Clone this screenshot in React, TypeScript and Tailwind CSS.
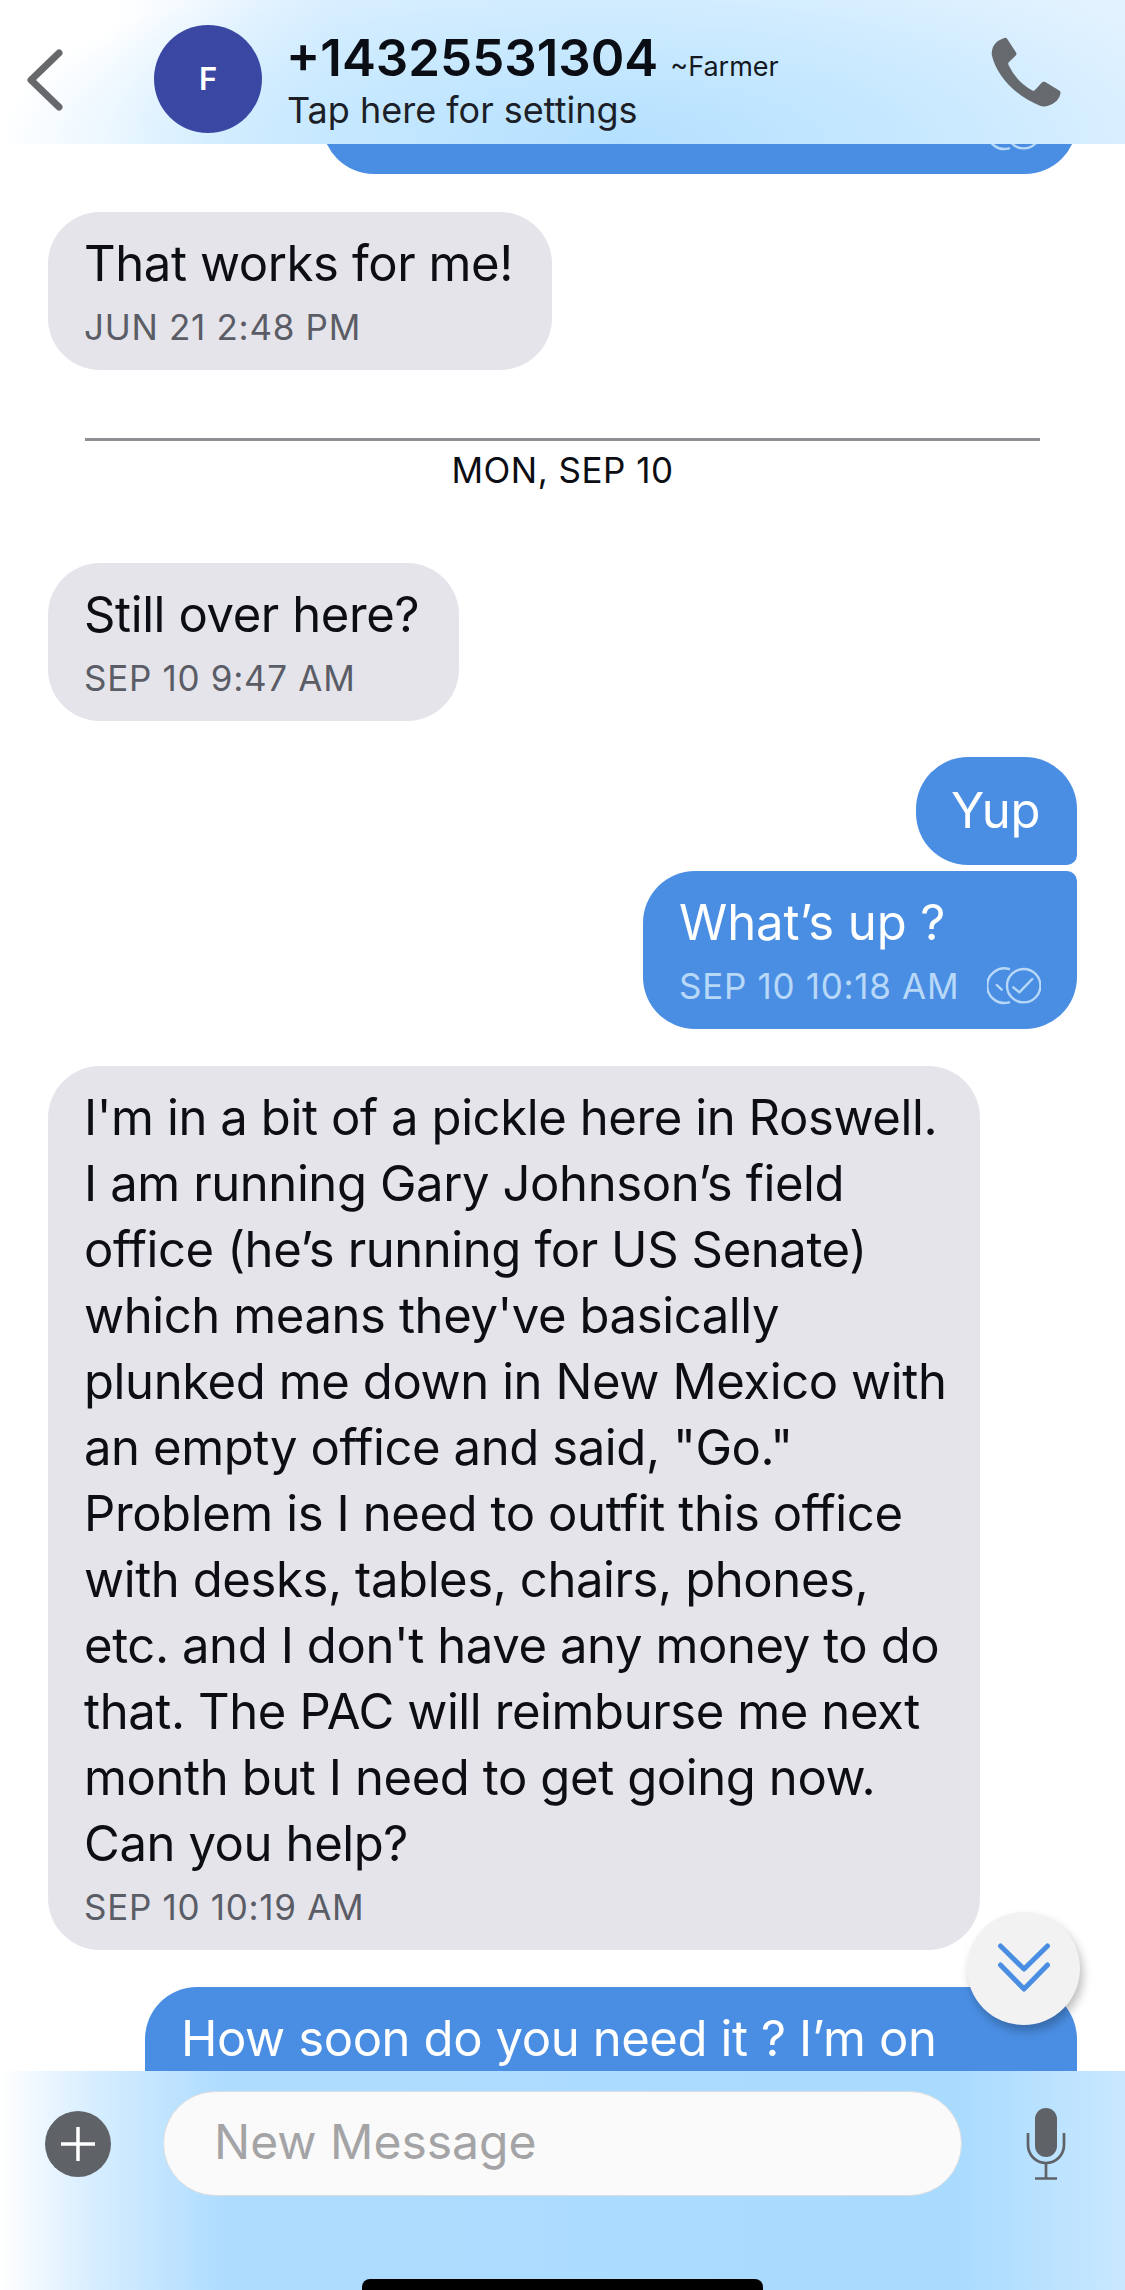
import React from "react";

const font = "[font-family:Inter,'Noto_Sans',sans-serif]";

function ReadIcon() {
  return (
    <svg className="shrink-0" width="54" height="38" viewBox="0 0 54 38" fill="none" stroke="#b8d8f8" strokeWidth="2.4" strokeLinecap="round" strokeLinejoin="round">
      <path d="M22 2A17.300 17.300 0 1 0 22 35.400" />
      <path d="M9.700 18l5 4.700" />
      <circle cx="36.700" cy="18.700" r="16.700" />
      <path d="M26.300 20.300l6 5 13-13.300" />
    </svg>
  );
}

function Received({ lines, time, width }: { lines: string[]; time: string; width: string }) {
  return (
    <div className={`${width} self-start shrink-0 rounded-[52px] bg-[#e4e4ea] pl-[36px] pt-[19px] pb-[23px]`}>
      <div className="text-[49px] leading-[66px] tracking-[-0.4px] text-[#0c0e14]">
        {lines.map((l) => (
          <div key={l} className="whitespace-nowrap">{l}</div>
        ))}
      </div>
      <div className="mt-[10px] text-[35px] leading-[40px] tracking-[0.7px] text-[#5a5c66]">{time}</div>
    </div>
  );
}

const long = [
  "I'm in a bit of a pickle here in Roswell.",
  "I am running Gary Johnson’s field",
  "office (he’s running for US Senate)",
  "which means they've basically",
  "plunked me down in New Mexico with",
  "an empty office and said, \"Go.\"",
  "Problem is I need to outfit this office",
  "with desks, tables, chairs, phones,",
  "etc. and I don't have any money to do",
  "that. The PAC will reimburse me next",
  "month but I need to get going now.",
  "Can you help?",
];

export default function App() {
  return (
    <div className={`${font} relative flex h-[2290px] w-[1125px] flex-col overflow-hidden bg-white`}>
      <header className="z-10 flex h-[144px] shrink-0 items-center bg-[radial-gradient(ellipse_620px_200px_at_55%_100%,#b4e0ff_0%,#c8e9ff_50%,rgba(200,233,255,0)_100%),linear-gradient(90deg,#ffffff_0%,#ffffff_10%,#dff0ff_30%,#e2f2ff_100%)] pt-[14px] pl-[26px] pr-[64px]">
        <svg className="mt-[2px] shrink-0" width="38" height="62" viewBox="0 0 38 62" fill="none" stroke="#66686c" strokeWidth="7" strokeLinecap="round" strokeLinejoin="round">
          <path d="M33 4L5 31l28 27" />
        </svg>
        <div className="ml-[90px] flex h-[108px] w-[108px] shrink-0 items-center justify-center rounded-full bg-[#3b48a3] text-[31px] font-semibold text-white">F</div>
        <div className="ml-[24px] mt-[3px] flex-1">
          <div className="flex items-baseline">
            <span className="text-[51px] leading-[58px] font-semibold text-[#0a0d14]">+14325531304</span>
            <span className="ml-[12px] text-[27px] text-[#15181f]">~Farmer</span>
          </div>
          <div className="pl-[1px] text-[36px] leading-[44px] text-[#1c1f28]">Tap here for settings</div>
        </div>
        <svg className="-mt-[14px] shrink-0" width="70" height="70" viewBox="93 70 210 211" fill="#66696d">
          <path d="M135 72Q141 72 143 78L168 117Q171 122 167 126L146 146Q143 150 146 156Q170 205 217 231Q222 234 226 229L245 208Q250 203 256 206L298 231Q303 234 302 240Q298 265 265 277Q252 282 240 277C170 250 110 190 95 125Q92 85 135 72Z" />
        </svg>
      </header>

      <main className="flex min-h-0 flex-1 flex-col overflow-hidden px-[48px]">
        <div className="-mt-[30px] flex h-[60px] w-[755px] shrink-0 items-end justify-end self-end rounded-b-[52px] bg-[#4a8ee3] pr-[36px] pb-[23px]">
          <ReadIcon />
        </div>
        <div className="mt-[38px] flex">
          <Received width="w-[504px]" lines={["That works for me!"]} time="JUN 21 2:48 PM" />
        </div>
        <div className="mx-[37px] mt-[68px] border-t-[3px] border-[#8e8e93]" />
        <div className="mt-[9px] text-center text-[35px] leading-[40px] tracking-[0.5px] text-[#0c0e14]">MON, SEP 10</div>
        <div className="mt-[73px] flex">
          <Received width="w-[411px]" lines={["Still over here?"]} time="SEP 10 9:47 AM" />
        </div>
        <div className="mt-[36px] w-[161px] self-end rounded-t-[52px] rounded-bl-[52px] rounded-br-[10px] bg-[#4a8ee3] py-[21px] pr-[2px] text-center text-[49px] leading-[66px] tracking-[-0.4px] text-white">Yup</div>
        <div className="mt-[6px] w-[434px] self-end rounded-[52px] rounded-tr-[10px] bg-[#4a8ee3] pl-[36px] pr-[36px] pt-[19px] pb-[23px] text-white">
          <div className="text-[49px] leading-[66px] tracking-[-0.1px]">What’s up ?</div>
          <div className="mt-[10px] flex items-center justify-between text-[35px] leading-[40px] tracking-[0.7px] text-[#b8d8f8]">
            <span className="whitespace-nowrap">SEP 10 10:18 AM</span>
            <ReadIcon />
          </div>
        </div>
        <div className="mt-[37px] flex">
          <Received width="w-[932px]" lines={long} time="SEP 10 10:19 AM" />
        </div>
        <div className="mt-[37px] h-[120px] w-[932px] shrink-0 self-end whitespace-nowrap rounded-t-[52px] bg-[#4a8ee3] pl-[36px] pt-[19px] text-[49px] leading-[66px] tracking-[-0.4px] text-white">How soon do you need it ? I’m on</div>
      </main>

      <button className="absolute left-[967px] top-[1912px] z-10 flex h-[113px] w-[113px] items-center justify-center rounded-full bg-[#f2f2f2] shadow-[3px_6px_10px_rgba(0,0,0,0.25)]">
        <svg width="54" height="54" viewBox="0 0 54 54" fill="none" stroke="#4a8ee3" strokeWidth="5" strokeLinecap="round" strokeLinejoin="round">
          <path d="M3.500 4L27 27 50.500 4" />
          <path d="M3.500 23L27 47 50.500 23" />
        </svg>
      </button>

      <footer className="relative z-10 h-[219px] shrink-0 bg-[linear-gradient(90deg,#ffffff_0%,#d8eeff_8%,#aedcff_20%,#a9dbff_85%,#c9e8ff_100%)] pt-[20px] pl-[45px]">
        <div className="flex items-center">
          <div className="flex h-[66px] w-[66px] shrink-0 items-center justify-center rounded-full bg-[#5f6368]">
            <svg width="38" height="38" viewBox="0 0 38 38" stroke="#ffffff" strokeWidth="3.5">
              <path d="M19 2v34M2 19h34" />
            </svg>
          </div>
          <div className="ml-[52px] flex h-[105px] w-[799px] shrink-0 items-center rounded-full border border-[#d9dde0] bg-[#fafafa] pb-[4px] pl-[50px] text-[48px] text-[#a4a4a6]">New Message</div>
          <svg className="ml-[64px] shrink-0" width="40" height="72" viewBox="0 0 40 72" fill="none" stroke="#5f6368" strokeWidth="2.700">
            <rect x="9" y="0" width="22" height="49" rx="11" fill="#5f6368" stroke="none" />
            <path d="M2 25V37A18 18 0 0 0 38 37V25" />
            <path d="M20 55V70M9 70.500H31" />
          </svg>
        </div>
        <div className="absolute bottom-0 left-[362px] h-[11px] w-[401px] rounded-t-[8px] bg-black" />
      </footer>
    </div>
  );
}
